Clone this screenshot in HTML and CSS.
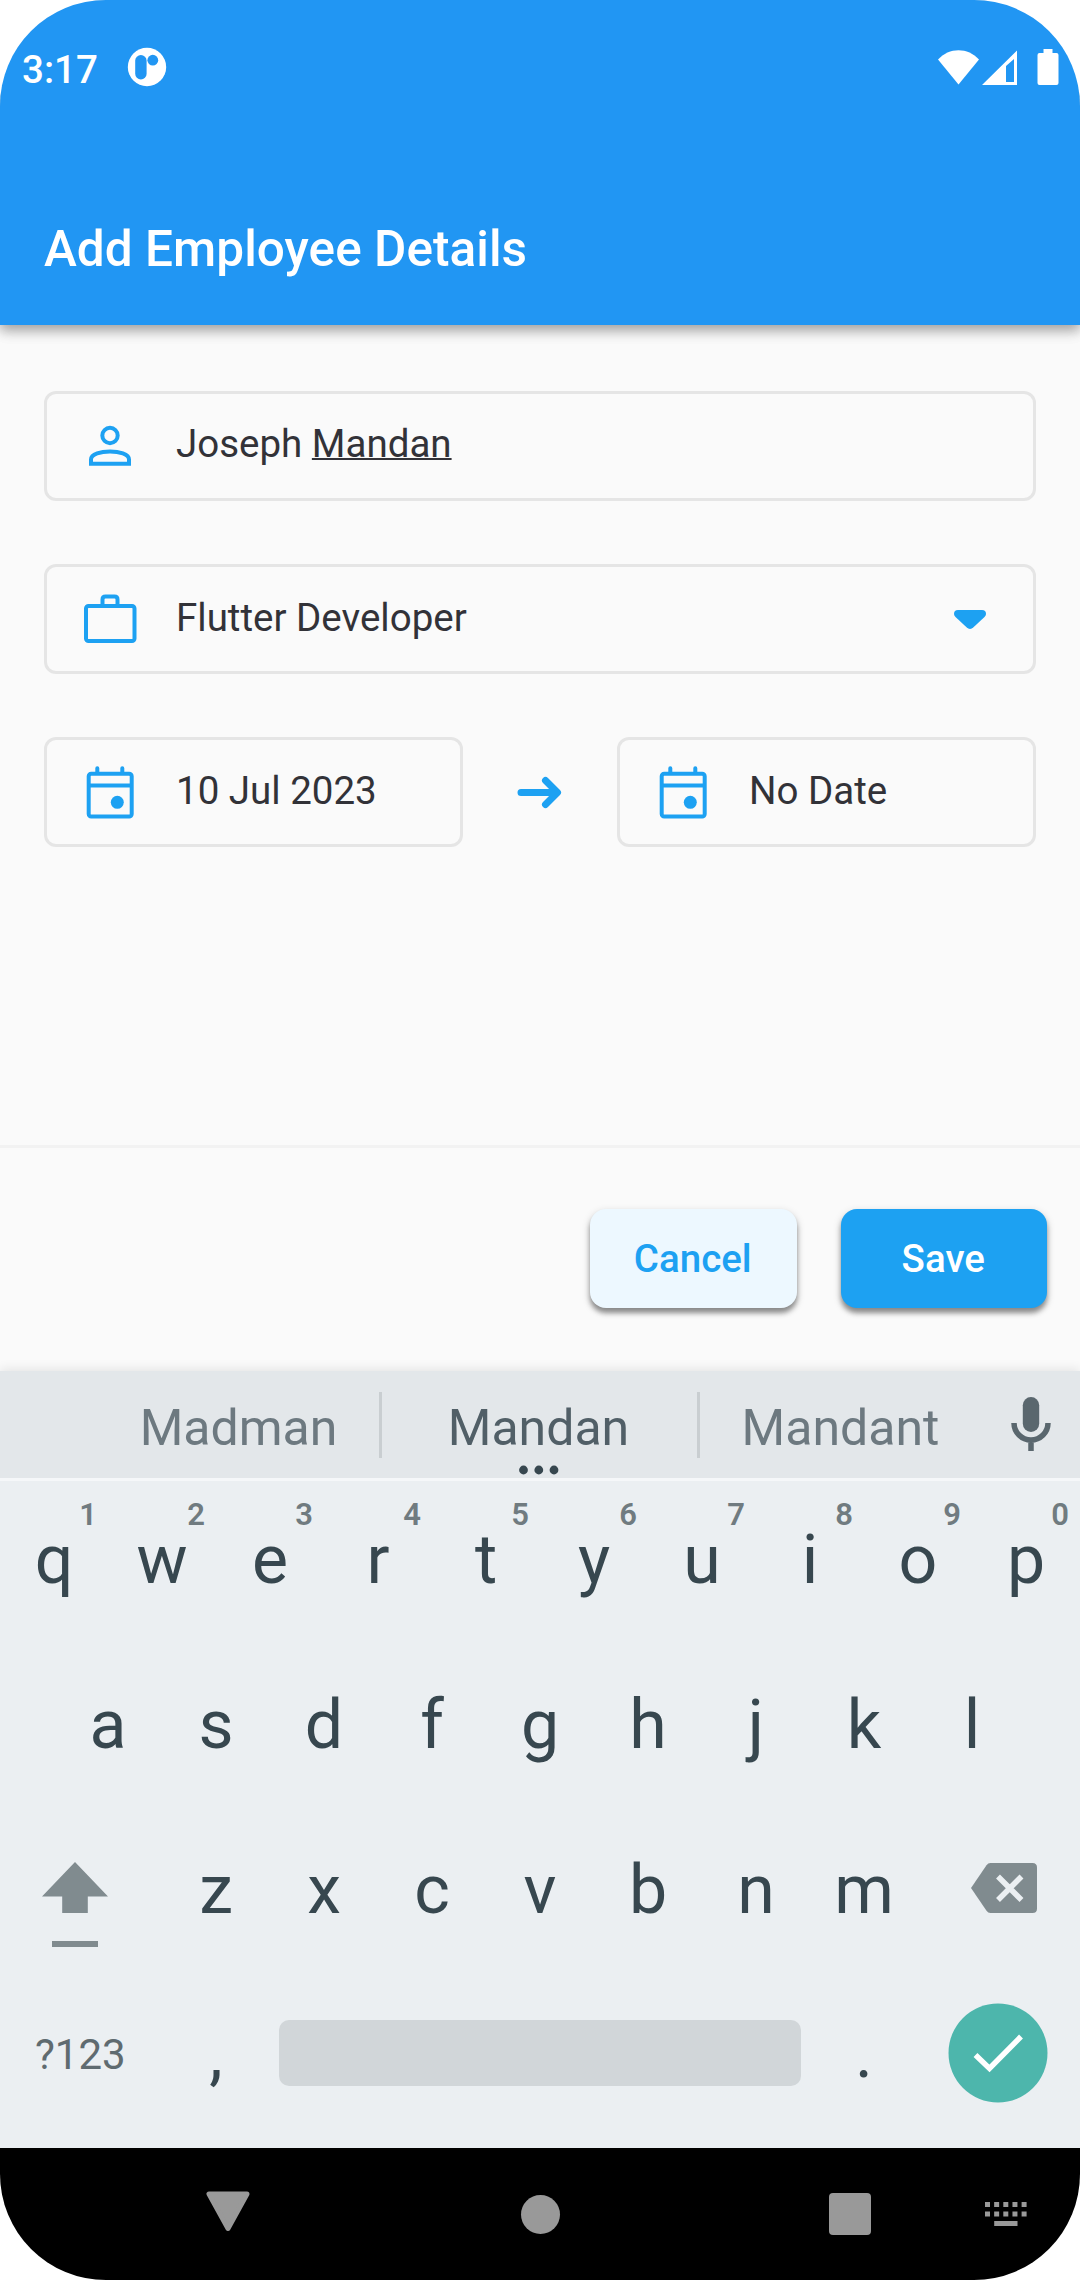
FILE: index.html
```html
<!DOCTYPE html>
<html lang="en">
<head>
<meta charset="utf-8">
<title>Add Employee Details</title>
<link rel="stylesheet" href="styles.css">
</head>
<body>
<div class="phone">
  <header class="app-bar">
    <div class="status-bar">
      <span class="clock">3:17</span>
      <svg class="notification" width="40" height="40" viewBox="0 0 40 40"><circle cx="20" cy="20" r="19.2" fill="#fff"/><rect x="8.2" y="8" width="11.4" height="24.4" rx="5.7" fill="#2196f3"/><circle cx="25.8" cy="13.2" r="5.4" fill="#2196f3"/></svg>
      <div class="indicators">
        <svg width="123" height="38" viewBox="0 0 123 38" fill="#fff">
          <path d="M0 10.5C11-2 30-2 41 10.5L20.5 35.5Z"/>
          <path fill-rule="evenodd" d="M44 36L79 1.500V36ZM68 17V33H76V10Z"/>
          <path d="M105.500 0h9v4h4q2 0 2 2v28q0 2-2 2h-17q-2 0-2-2V6q0-2 2-2h4Z"/>
        </svg>
      </div>
    </div>
    <h1 class="title">Add Employee Details</h1>
  </header>

  <main class="form">
    <div class="field">
      <svg class="field-icon" width="56" height="56" viewBox="0 0 56 56"><circle cx="28" cy="17.500" r="7.700"/><path d="M9 41.500v4.300h38V41.500C47 36 37 33.500 28 33.500S9 36 9 41.500Z"/></svg>
      <span class="value value-edited">Joseph <span class="composing">Mandan</span></span>
    </div>
    <div class="field">
      <svg class="field-icon" width="56" height="56" viewBox="0 0 56 56"><rect x="4" y="15" width="48.500" height="35" rx="2.500"/><path d="M20.500 15V8.500q0-3 3-3h9q3 0 3 3V15"/></svg>
      <span class="value">Flutter Developer</span>
      <svg class="caret" width="32" height="22" viewBox="0 0 32 22"><path d="M4 2H28Q32 2 32 6Q32 7.500 30.500 9L19.500 19.300Q16 22.500 12.500 19.300L1.500 9Q0 7.500 0 6Q0 2 4 2Z" fill="#1da1f2"/></svg>
    </div>
    <div class="date-row">
      <div class="field">
        <svg class="field-icon" width="56" height="56" viewBox="0 0 56 56"><rect x="6.700" y="9.800" width="43" height="42.700" rx="2.500"/><path d="M7 21.500H49.500"/><path d="M15.300 9V4.200M40.300 9V4.200" stroke-linecap="round"/><circle cx="35.300" cy="38.300" r="6.500" class="dot"/></svg>
        <span class="value">10 Jul 2023</span>
      </div>
      <svg class="arrow" width="46" height="36" viewBox="0 0 46 36"><path d="M4 18.500H40M28.500 6.500L40.500 18.500L28.500 30.500"/></svg>
      <div class="field">
        <svg class="field-icon" width="56" height="56" viewBox="0 0 56 56"><rect x="6.700" y="9.800" width="43" height="42.700" rx="2.500"/><path d="M7 21.500H49.500"/><path d="M15.300 9V4.200M40.300 9V4.200" stroke-linecap="round"/><circle cx="35.300" cy="38.300" r="6.500" class="dot"/></svg>
        <span class="value">No Date</span>
      </div>
    </div>
  </main>

  <footer class="actions">
    <button class="btn btn-cancel">Cancel</button>
    <button class="btn btn-save">Save</button>
  </footer>

  <section class="keyboard">
    <div class="suggestions">
      <span class="suggestion">Madman</span>
      <span class="suggestion current">Mandan<svg class="more" width="42" height="10" viewBox="0 0 42 10"><circle cx="5.500" cy="5" r="4.400"/><circle cx="20.800" cy="5" r="4.400"/><circle cx="36" cy="5" r="4.400"/></svg></span>
      <span class="suggestion">Mandant</span>
      <svg class="mic" width="40" height="54" viewBox="0 0 40 54"><rect x="11.800" y="0" width="16.400" height="35" rx="8.200" fill="#5a676e"/><path d="M3 26a17 17 0 0 0 34 0M20 43V54" fill="none" stroke="#5a676e" stroke-width="5.500"/></svg>
    </div>
    <div class="row row-top">
      <span class="key">q<i class="hint">1</i></span><span class="key">w<i class="hint">2</i></span><span class="key">e<i class="hint">3</i></span><span class="key">r<i class="hint">4</i></span><span class="key">t<i class="hint">5</i></span><span class="key">y<i class="hint">6</i></span><span class="key">u<i class="hint">7</i></span><span class="key">i<i class="hint">8</i></span><span class="key">o<i class="hint">9</i></span><span class="key">p<i class="hint">0</i></span>
    </div>
    <div class="row">
      <span class="key">a</span><span class="key">s</span><span class="key">d</span><span class="key">f</span><span class="key">g</span><span class="key">h</span><span class="key">j</span><span class="key">k</span><span class="key">l</span>
    </div>
    <div class="row">
      <span class="side-key shift"><svg width="66" height="86" viewBox="0 0 66 86" fill="#808b8f"><path d="M33 0L66 34.500H45.800V51H20.200V34.500H0Z"/><rect x="10" y="79" width="46" height="6"/></svg></span>
      <span class="key">z</span><span class="key">x</span><span class="key">c</span><span class="key">v</span><span class="key">b</span><span class="key">n</span><span class="key">m</span>
      <span class="side-key backspace"><svg width="66" height="50" viewBox="0 0 66 50"><path d="M19.500 0H61.500Q66 0 66 4.500V45.500Q66 50 61.500 50H19.500Q17 50 15.500 47.800L0 25L15.500 2.200Q17 0 19.500 0Z" fill="#808b8f"/><path d="M27 13.500L50.500 37M50.500 13.500L27 37" stroke="#ebeff2" stroke-width="5.500"/></svg></span>
    </div>
    <div class="row row-bottom">
      <span class="side-key symbols">?123</span>
      <span class="key">,</span>
      <span class="space"></span>
      <span class="key">.</span>
      <span class="side-key enter"><svg width="100" height="100" viewBox="0 0 100 100"><circle cx="50" cy="50" r="49.500" fill="#4db6ac"/><path d="M27.500 52L41.500 65.500L73 33.500" fill="none" stroke="#fff" stroke-width="5.500"/></svg></span>
    </div>
  </section>

  <nav class="nav-bar">
    <svg class="nav-back" width="46" height="42" viewBox="0 0 46 42"><path d="M4 3H42L23 37.500Z" fill="#999" stroke="#999" stroke-width="5" stroke-linejoin="round"/></svg>
    <span class="nav-home"></span>
    <span class="nav-recent"></span>
    <svg class="nav-ime" width="42" height="24" viewBox="0 0 42 24" fill="none" stroke="#999" stroke-width="5"><path d="M0 2.500H42M0 12H42" stroke-dasharray="5 4.150"/><path d="M9.200 21.500H32.500"/></svg>
  </nav>
</div>
</body>
</html>
```
FILE: styles.css
```css
* { box-sizing: border-box; }

body {
  margin: 0;
  background: #fff;
  font-family: Roboto, "Noto Sans", sans-serif;
}

svg { display: block; flex: none; }

.phone {
  display: flex;
  flex-direction: column;
  width: 1080px;
  height: 2280px;
  overflow: hidden;
  border-radius: 106px;
  background: #fafafa;
}

/* App bar */
.app-bar {
  flex: none;
  height: 325px;
  background: #2196f3;
  color: #fff;
  box-shadow: 0 6px 11px rgba(0, 0, 0, .25), 0 3px 16px rgba(0, 0, 0, .16);
}
.status-bar {
  display: flex;
  align-items: center;
  height: 140px;
  padding: 0 19px 0 22px;
}
.clock { font-size: 38.5px; font-weight: 500; line-height: 46px; width: 105px; }
.notification { margin-bottom: 6px; }
.indicators { margin-left: auto; padding-bottom: 4px; }
.title {
  margin: 0;
  padding: 33px 44px 0;
  font-size: 49.5px;
  font-weight: 500;
  letter-spacing: .05px;
  line-height: 152px;
}

/* Form */
.form {
  flex: none;
  display: flex;
  flex-direction: column;
  gap: 63px;
  height: 820px;
  padding: 66px 44px 0;
}
.field {
  display: flex;
  align-items: center;
  height: 110px;
  padding: 0 47px 0 35px;
  border: 3px solid #e5e5e5;
  border-radius: 12px;
}
.field-icon { fill: none; stroke: #1da1f2; stroke-width: 4; }
.field-icon .dot { fill: #1da1f2; stroke: none; }
.value {
  flex: 1;
  margin-left: 38px;
  padding-bottom: 2px;
  color: #323238;
  font-size: 38.5px;
  line-height: 46px;
  white-space: nowrap;
}
.value-edited { padding-bottom: 4px; }
.composing {
  text-decoration: underline;
  text-decoration-thickness: 2px;
  text-underline-offset: 1px;
  text-decoration-skip-ink: none;
}
.date-row { display: flex; align-items: center; justify-content: space-between; }
.date-row .field { width: 419px; }
.arrow { fill: none; stroke: #1da1f2; stroke-width: 7; stroke-linecap: round; stroke-linejoin: round; }

/* Actions */
.actions {
  flex: none;
  display: flex;
  justify-content: flex-end;
  gap: 44px;
  height: 226px;
  padding: 61px 33px 0;
  border-top: 3px solid #f2f2f2;
}
.btn {
  width: 206.5px;
  height: 99px;
  padding: 0 1px 0 0;
  border: 0;
  border-radius: 16px;
  font: 500 38.5px/46px Roboto, "Noto Sans", sans-serif;
  box-shadow: 0 5px 5px rgba(0, 0, 0, .36), 0 3px 8px rgba(0, 0, 0, .18);
}
.btn-cancel { background: #edf8ff; color: #1da1f2; }
.btn-save { background: #1da1f2; color: #fff; }

/* Keyboard */
.keyboard {
  flex: none;
  height: 777px;
  background: #ebeff2;
  color: #37474f;
  box-shadow: 0 -2px 10px rgba(0, 0, 0, .09);
}
.suggestions {
  display: flex;
  align-items: center;
  height: 110px;
  padding-left: 98px;
  background: #e3e7ea;
  border-bottom: 3px solid #f5f7f9;
}
.suggestion {
  width: 281px;
  height: 66px;
  color: #6d7980;
  font-size: 50px;
  line-height: 72px;
  text-align: center;
}
.suggestion.current {
  position: relative;
  width: 321px;
  padding-right: 2px;
  color: #515f67;
  border: solid #c9ced1;
  border-width: 0 3px;
}
.more { position: absolute; left: 136px; top: 73px; fill: #37474f; }
.mic { margin: -1px 0 0 30px; }

.row { display: flex; justify-content: center; align-items: center; height: 165px; }
.row-top { height: 161px; }
.row-bottom { justify-content: flex-start; }
.key {
  position: relative;
  width: 108px;
  height: 165px;
  font-size: 68px;
  line-height: 167px;
  text-align: center;
}
.row-top .key { height: 161px; line-height: 159px; }
.row-bottom .key { line-height: 165px; }
.hint {
  position: absolute;
  left: 68px;
  top: 18px;
  width: 40px;
  color: #707b80;
  font-size: 31px;
  font-style: normal;
  font-weight: 600;
  line-height: 31px;
}
.side-key { flex: none; display: flex; align-items: center; width: 162px; height: 165px; }
.shift { padding: 31px 0 0 42px; }
.backspace { padding: 0 0 4px 53px; }
.symbols { padding-left: 35px; color: #5f6b70; font-size: 42px; line-height: 50px; }
.space {
  width: 522px;
  height: 66px;
  margin: 0 9px 3px;
  border-radius: 10px;
  background: #d1d6d9;
}
.enter { padding: 0 0 3px 30px; }

/* System navigation */
.nav-bar {
  flex: none;
  display: flex;
  align-items: center;
  height: 132px;
  padding-left: 205px;
  background: #000;
}
.nav-back { margin-bottom: 5px; }
.nav-home { width: 39px; height: 39px; margin-left: 270px; border-radius: 50%; background: #999; }
.nav-recent { width: 42px; height: 42px; margin-left: 269px; border-radius: 4px; background: #999; }
.nav-ime { margin-left: 114px; }
```
